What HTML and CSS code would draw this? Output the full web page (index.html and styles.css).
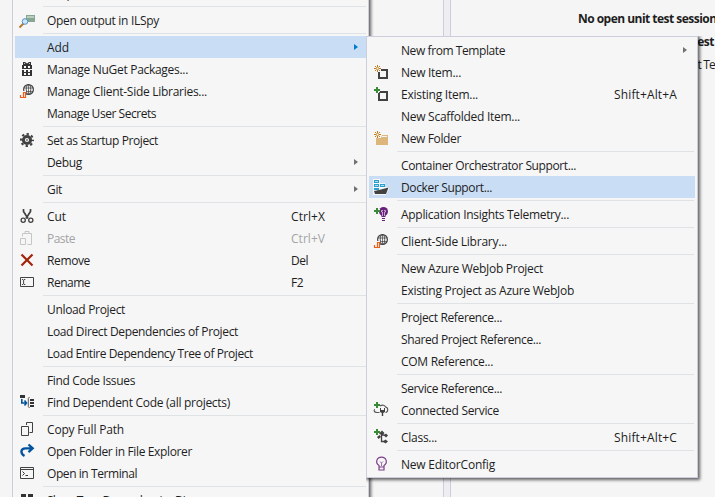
FILE: index.html
```
<!DOCTYPE html>
<html lang="en">
<head>
<meta charset="utf-8">
<title>Project context menu</title>
<link rel="stylesheet" href="styles.css">
</head>
<body>
<svg class="defs" width="0" height="0">
  <defs>
    <symbol id="globe" viewBox="0 1 16 16"><g fill="none" stroke="#424242"><circle cx="9.5" cy="6.5" r="4.900" stroke-width="1.2"/><ellipse cx="9.5" cy="6.5" rx="2.2" ry="4.900" stroke-width=".9"/><path d="M5 5h9M5 8.500h9M9.500 1.500v10" stroke-width=".7"/></g><path d="M1 8h6v7H1z" fill="#f6f6f6"/><path d="M4 9.500h2.500v5H4.500V9.500M4 14.500H1.500V12" fill="none" stroke="#e8601c" stroke-width="1.200"/></symbol>
    <symbol id="plus" viewBox="0 0 6 6"><path d="M2 0h2v2h2v2H4v2H2V4H0V2h2z" fill="#388a34"/></symbol>
    <symbol id="spark" viewBox="0 0 7 7"><path d="M3.500 0v2M3.500 5v2M0 3.500h2M5 3.500h2M1 1l1.300 1.300M4.700 4.700L6 6M6 1L4.700 2.300M2.300 4.700L1 6" stroke="#c27d1a"/><circle cx="3.500" cy="3.500" r="1.200" fill="#f6f6f6" stroke="#c27d1a" stroke-width=".8"/></symbol>
  </defs>
</svg>
<div class="desktop">
  <div class="splitter"></div>
  <div class="tests">
    <p class="title" data-w="144">No open unit test sessions</p>
    <p class="step" data-w="86">Create unit test</p>
    <p class="link" data-w="47">Unit Tests</p>
  </div>
</div>

<div class="menu main">
  <div class="item"><span class="icon"></span><span class="label">Scope to This</span></div>
  <hr>
  <div class="item"><svg class="icon" viewBox="0 0 16 16"><path d="M7 2h9v7H7z" fill="#86a892"/><path d="M8 3h7v2H8z" fill="#b7cfbc"/><path d="M.5 14.500l4-4" stroke="#b5792e" stroke-width="2"/><circle cx="6" cy="8.500" r="2.800" fill="#c7e8ff" stroke="#5a91bd"/></svg><span class="label" data-w="112">Open output in ILSpy</span></div>
  <hr>
  <div class="item active"><span class="icon"></span><span class="label" data-w="22">Add</span><i class="arrow"></i></div>
  <div class="item"><svg class="icon" viewBox="0 0 16 16"><path d="M4 0h2l2 1.500L10 0h2v3h1v4H3V3h1zM3 8h10v6H3z" fill="#333"/><path d="M5 1.200h1v.8H5zM10 1.200h1V2h-1zM5 4h2v2H5zM9 4h2v2H9zM5 7h2v3H5zM9 7h2v3H9zM5 11h2v2H5zM9 11h2v2H9z" fill="#f6f6f6"/></svg><span class="label" data-w="141">Manage NuGet Packages...</span></div>
  <div class="item"><svg class="icon"><use href="#globe"/></svg><span class="label" data-w="160">Manage Client-Side Libraries...</span></div>
  <div class="item"><span class="icon"></span><span class="label" data-w="109">Manage User Secrets</span></div>
  <hr>
  <div class="item"><svg class="icon" viewBox="0 0 16 16"><circle cx="8" cy="7" r="3.600" fill="none" stroke="#424242" stroke-width="3"/><circle cx="8" cy="7" r="6" fill="none" stroke="#424242" stroke-width="2" stroke-dasharray="2.360 2.352" stroke-dashoffset="1.180"/><circle cx="8" cy="7" r="1" fill="#777"/></svg><span class="label" data-w="111">Set as Startup Project</span></div>
  <div class="item"><span class="icon"></span><span class="label" data-w="35">Debug</span><i class="arrow"></i></div>
  <hr>
  <div class="item"><span class="icon"></span><span class="label" data-w="15">Git</span><i class="arrow"></i></div>
  <hr>
  <div class="item"><svg class="icon" viewBox="0 0 16 16"><g fill="none" stroke="#424242"><path d="M4.500 0v2.500l4.500 7M11.500 0v2.500L7 9.500" stroke-width="1.700"/><circle cx="4.200" cy="11.300" r="2.100" stroke-width="1.300"/><circle cx="11.800" cy="11.300" r="2.100" stroke-width="1.300"/></g></svg><span class="label" data-w="19">Cut</span><span class="keys" data-w="34">Ctrl+X</span></div>
  <div class="item disabled"><svg class="icon" viewBox="0 0 16 16"><path d="M1.500 7.500h5v6h-5zM3.500 5.500v-3h9v11h-4M6 2V.5h4V2" fill="none" stroke="#c6c6c6"/></svg><span class="label" data-w="28">Paste</span><span class="keys" data-w="34">Ctrl+V</span></div>
  <div class="item"><svg class="icon" viewBox="0 0 16 16"><path d="M2.500 1.500l11 11M13.500 1.500l-11 11" stroke="#a1260d" stroke-width="2.200"/></svg><span class="label" data-w="43">Remove</span><span class="keys" data-w="17">Del</span></div>
  <div class="item"><svg class="icon" viewBox="0 0 16 16"><path d="M1.500 2.500h13v9h-13z" fill="none" stroke="#424242"/><path d="M3 4.500h1.300M5 4.500h1.300M4.600 5v4M3 9.500h1.300M5 9.500h1.300" stroke="#333" stroke-width=".9"/></svg><span class="label" data-w="43">Rename</span><span class="keys" data-w="12">F2</span></div>
  <hr>
  <div class="item"><span class="icon"></span><span class="label" data-w="78">Unload Project</span></div>
  <div class="item"><span class="icon"></span><span class="label" data-w="191">Load Direct Dependencies of Project</span></div>
  <div class="item"><span class="icon"></span><span class="label" data-w="206">Load Entire Dependency Tree of Project</span></div>
  <hr>
  <div class="item"><span class="icon"></span><span class="label" data-w="88">Find Code Issues</span></div>
  <div class="item"><svg class="icon" viewBox="0 0 16 16"><path d="M1 0h5v3H1zM11 4h4v2h-4zM11 7h4v2h-4zM11 10h4v2h-4z" fill="#333"/><path d="M2.800 4v4h4M5.500 5.500L7.500 8l-2 2.500" fill="none" stroke="#00539c" stroke-width="1.600"/><path d="M10.500 2L9.300 3.500v8l1.200 1.500" fill="none" stroke="#555"/></svg><span class="label" data-w="183">Find Dependent Code (all projects)</span></div>
  <hr>
  <div class="item"><svg class="icon" viewBox="0 0 16 16"><path d="M2.500 4.500h7v9h-7zM7.500 3V.5h6v10h-3" fill="none" stroke="#424242"/></svg><span class="label" data-w="77">Copy Full Path</span></div>
  <div class="item"><svg class="icon" viewBox="0 0 16 16"><path d="M5.500 12C1 9.500 1.500 4.300 6.500 4.300H13M9.500 .5l4.200 3.800-4.200 3.800" fill="none" stroke="#00539c" stroke-width="2.300"/></svg><span class="label" data-w="145">Open Folder in File Explorer</span></div>
  <div class="item"><svg class="icon" viewBox="0 0 16 16"><path d="M1.500 1.500h13v11h-13zM2 3.500h12" fill="none" stroke="#424242"/><path d="M3.500 5.500l2 2-2 2M6.500 9.500H9" fill="none" stroke="#333"/></svg><span class="label" data-w="90">Open in Terminal</span></div>
  <hr>
  <div class="item"><svg class="icon" viewBox="0 0 16 16"><path d="M2 1h5v5H2zM9 1h5v5H9z" fill="#333"/></svg><span class="label" data-w="170">Show Type Dependencies Diagram</span></div>
</div>

<div class="menu sub">
  <div class="item"><span class="icon"></span><span class="label" data-w="104">New from Template</span><i class="arrow"></i></div>
  <div class="item"><svg class="icon" viewBox="0 0 16 16"><path d="M8 5h6v8H6V7" fill="none" stroke="#424242" stroke-width="2"/><use href="#spark" x="1" y="0" width="7" height="7"/></svg><span class="label" data-w="60">New Item...</span></div>
  <div class="item"><svg class="icon" viewBox="0 0 16 16"><path d="M6 5h8v8H6z" fill="none" stroke="#424242" stroke-width="2"/><path d="M0 0h7v5H6v1H0z" fill="#f6f6f6"/><use href="#plus" x="1" y="0" width="6" height="6"/></svg><span class="label" data-w="77">Existing Item...</span><span class="keys" data-w="63">Shift+Alt+A</span></div>
  <div class="item"><span class="icon"></span><span class="label" data-w="119">New Scaffolded Item...</span></div>
  <div class="item"><svg class="icon" viewBox="0 0 16 16"><path d="M3 7h5l1-3h6v10H3z" fill="#dcb67a"/><path d="M9 5.500h5" stroke="#f6f6f6"/><use href="#spark" x="1" y="0" width="7" height="7"/></svg><span class="label" data-w="60">New Folder</span></div>
  <hr>
  <div class="item"><span class="icon"></span><span class="label" data-w="175">Container Orchestrator Support...</span></div>
  <div class="item active"><svg class="icon" viewBox="0 0 16 16"><path d="M0-1h7v4h5v4h4v2l-3 6H0z" fill="#f6f6f6"/><path d="M1 0h5v3H1zM1 4h5v3H1zM7 4h5v3H7zM1 8h5v2H1z" fill="#2a9fd0"/><path d="M2 1h3v1H2zM2 5h3v1H2zM8 5h3v1H8z" fill="#a9dcf2"/><path d="M1 11l5-1 9.500-2.500-2.500 6.500H2z" fill="#424242"/></svg><span class="label" data-w="91">Docker Support...</span></div>
  <hr>
  <div class="item"><svg class="icon" viewBox="0 0 16 16"><circle cx="10.500" cy="4.500" r="4.500" fill="#68217a"/><path d="M8.500 7h4v3h-4zM9 11h3v1H9zM9 13h3v1H9z" fill="#68217a"/><path d="M9.500 9V5H8.500V3.500h1.500M11.500 9V5h1V3.500H11" fill="none" stroke="#d9c8df" stroke-width=".8"/><path d="M0 0h6v2h1v3H6v2H0z" fill="#f6f6f6"/><use href="#plus" x="1" y="1" width="6" height="6"/></svg><span class="label" data-w="168">Application Insights Telemetry...</span></div>
  <hr>
  <div class="item"><svg class="icon"><use href="#globe"/></svg><span class="label" data-w="106">Client-Side Library...</span></div>
  <hr>
  <div class="item"><span class="icon"></span><span class="label" data-w="142">New Azure WebJob Project</span></div>
  <div class="item"><span class="icon"></span><span class="label" data-w="173">Existing Project as Azure WebJob</span></div>
  <hr>
  <div class="item"><span class="icon"></span><span class="label" data-w="101">Project Reference...</span></div>
  <div class="item"><span class="icon"></span><span class="label" data-w="140">Shared Project Reference...</span></div>
  <div class="item"><span class="icon"></span><span class="label" data-w="92">COM Reference...</span></div>
  <hr>
  <div class="item"><span class="icon"></span><span class="label" data-w="101">Service Reference...</span></div>
  <div class="item"><svg class="icon" viewBox="0 0 16 16"><path d="M6.500 9.500H4C.5 9.500 .8 6.500 2 6.500M7 3c2-1.500 5-1 5.500 1 3 .5 3 5 0 5.500" fill="none" stroke="#555" stroke-width="1.100"/><path d="M7 5h1v2h3V5h1v4l-1.800 1v3H8.800v-3L7 9z" fill="#424242"/><use href="#plus" x="1" y="-1" width="6" height="6"/></svg><span class="label" data-w="98">Connected Service</span></div>
  <hr>
  <div class="item"><svg class="icon" viewBox="0 0 16 16"><path d="M6 3.500l3-3 2.500 2.500L9 5.500zM11 5.500l2-2 2 2-2 2zM10 11.500l2.500-2 2.500 2-2.500 2zM4 7l2.500-2 1.500 2-2.500 2z" fill="#424242"/><path d="M8 4.500l5 1M8.500 5v6.500H12" fill="none" stroke="#424242" stroke-width="1.300"/><use href="#plus" x="1" y="-1" width="6" height="6"/></svg><span class="label" data-w="36">Class...</span><span class="keys" data-w="63">Shift+Alt+C</span></div>
  <hr>
  <div class="item"><svg class="icon" viewBox="0 0 16 16"><path d="M6 10V8.500C2 6 3.500.2 8.500.2S15 6 11 8.500V13H6v-3h5" fill="none" stroke="#7b3f8c" stroke-width="1.200"/><path d="M8.500 9V6L7 4.500M8.500 6L10 4.500" fill="none" stroke="#9b6aa8"/></svg><span class="label" data-w="94">New EditorConfig</span></div>
</div>
<script src="fit.js"></script>
</body>
</html>
```
FILE: styles.css
```
* { box-sizing: border-box; }
body {
  margin: 0;
  width: 715px;
  height: 497px;
  overflow: hidden;
  position: relative;
  background: #f5f5f5;
  color: #1e1e1e;
  font: 12px/22px "Open Sans", "Noto Sans", sans-serif;
}
.defs { position: absolute; }
.desktop { display: flex; height: 497px; padding-left: 443px; }
.splitter {
  flex: none;
  width: 8px;
  background: #eeeef2;
  border: solid #cccedb;
  border-width: 0 1px;
}
.tests { flex: none; width: 264px; padding: 8px 0 0 127px; overflow: hidden; white-space: nowrap; }
.tests p { margin: 0; height: 23px; }
.title, .step { font-weight: 700; }
.tests .step { margin-left: 50px; }
.tests .link { margin-left: 103px; }
.menu {
  position: absolute;
  background: #f6f6f6;
  border: 1px solid #cccedb;
  padding: 2px;
  box-shadow: 1px 1px 3px 1px rgba(0, 0, 0, .6);
  clip-path: inset(0 -6px -6px 0);
}
.main { left: 12px; top: -21px; width: 357px; padding-right: 1px; }
.sub { left: 366px; top: 36px; width: 332px; }
.item { display: flex; height: 22px; align-items: flex-start; white-space: nowrap; padding-left: 4px; }
.icon { flex: none; width: 16px; height: 16px; margin: 4px 12px 0 0; overflow: visible; }
.label, .keys { padding-top: 1px; }
.label { flex: 1; }
.keys { width: 76px; }
.sub .keys { width: 81px; }
.arrow {
  width: 0;
  height: 0;
  margin: 8px 9px 0 0;
  border: solid transparent;
  border-width: 3.5px 0 3.5px 4px;
  border-left-color: #717171;
}
.sub .arrow { margin-right: 8px; }
.active { background: #c9def5; }
.active .arrow { border-left-color: #007acc; }
.disabled { color: #a2a4a5; }
hr { height: 1px; margin: 2px 1px 2px 28px; border: 0; background: #e0e3e6; }
```
FILE: fit.js
```
// Track each label so that it fills its nominal width.
document.querySelectorAll('[data-w]').forEach(function (el) {
  var range = document.createRange();
  range.selectNodeContents(el);
  var natural = range.getBoundingClientRect().width;
  el.style.letterSpacing = (el.dataset.w - natural) / el.textContent.length + 'px';
});
```
